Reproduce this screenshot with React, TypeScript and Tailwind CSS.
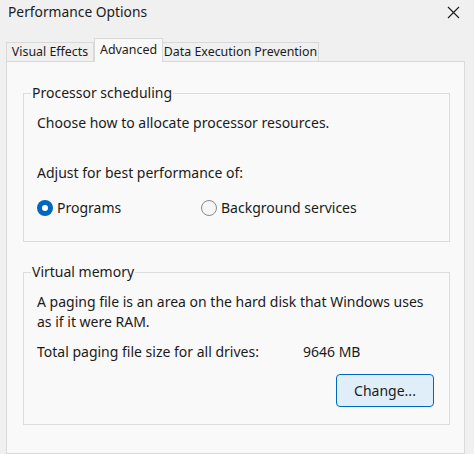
import React from "react";

function Radio({ checked, label }: { checked?: boolean; label: string }) {
  return (
    <label className="flex items-center gap-[4px]">
      {checked ? (
        <span className="flex h-[16px] w-[16px] items-center justify-center rounded-full bg-[#0067c0]">
          <span className="h-[6px] w-[6px] rounded-full bg-white" />
        </span>
      ) : (
        <span className="h-[16px] w-[16px] rounded-full border border-[#8a8a8a] bg-[#f6f6f6]" />
      )}
      <span>{label}</span>
    </label>
  );
}

function Group({ title, children, className }: { title: string; children: React.ReactNode; className?: string }) {
  return (
    <fieldset className={"border border-[#dcdcdc] " + (className ?? "")}>
      <legend className="ml-[7px] px-[1px] leading-[20px]">{title}</legend>
      <div className="pl-[13px]">{children}</div>
    </fieldset>
  );
}

export default function App() {
  return (
    <div className="flex h-[454px] w-[474px] flex-col overflow-hidden bg-[#f0f0f0] font-['Noto_Sans',sans-serif] text-[14px] text-[#1b1b1b]">
      {/* title bar */}
      <div className="flex h-[38px] items-start justify-between pl-[8px] pr-[14px]">
        <span className="text-[13.8px] leading-[24px]">Performance Options</span>
        <svg width="13" height="13" viewBox="0 0 13 13" className="mt-[6px]">
          <path d="M1 1 L12 12 M12 1 L1 12" stroke="#1b1b1b" strokeWidth="1.1" fill="none" />
        </svg>
      </div>

      {/* tabs */}
      <div className="relative z-10 flex h-[23px] items-end whitespace-nowrap pl-[6px] text-[12.4px]">
        <div className="flex h-[19px] w-[88px] items-center justify-center border border-b-0 border-[#d9d9d9] bg-[#f0f0f0] pt-[1px]">
          Visual Effects
        </div>
        <div className="-mb-[1px] flex h-[24px] w-[69px] items-center justify-center border border-b-0 border-[#d9d9d9] bg-[#f9f9f9] pb-[1px]">
          Advanced
        </div>
        <div className="flex h-[19px] w-[156px] items-center justify-center border border-b-0 border-l-0 border-[#d9d9d9] bg-[#f0f0f0] pt-[1px]">
          Data Execution Prevention
        </div>
      </div>

      {/* tab page */}
      <div className="ml-[6px] w-[459px] flex-1 border border-[#d9d9d9] bg-[#f9f9f9] pl-[16px] pt-[21px]">
        <Group title="Processor scheduling" className="w-[427px] pb-[23px]">
          <p className="mt-[10px] leading-[20px]">Choose how to allocate processor resources.</p>
          <p className="mt-[30px] leading-[20px]">Adjust for best performance of:</p>
          <div className="mt-[15px] flex leading-[20px]">
            <div className="w-[164px]">
              <Radio checked label="Programs" />
            </div>
            <Radio label="Background services" />
          </div>
        </Group>

        <Group title="Virtual memory" className="mt-[20px] w-[427px] pb-[17px]">
          <p className="mt-[10px] whitespace-nowrap leading-[20px]">
            A paging file is an area on the hard disk that Windows uses
            <br />
            as if it were RAM.
          </p>
          <div className="mt-[10px] flex leading-[20px]">
            <span className="w-[266px]">Total paging file size for all drives:</span>
            <span>9646 MB</span>
          </div>
          <div className="mt-[12px] flex justify-end pr-[15px]">
            <button className="h-[33px] w-[98px] rounded-[4px] border border-[#0067c0] bg-[#e0eef9] text-[14px] text-[#1b1b1b]">
              Change...
            </button>
          </div>
        </Group>
      </div>
    </div>
  );
}
